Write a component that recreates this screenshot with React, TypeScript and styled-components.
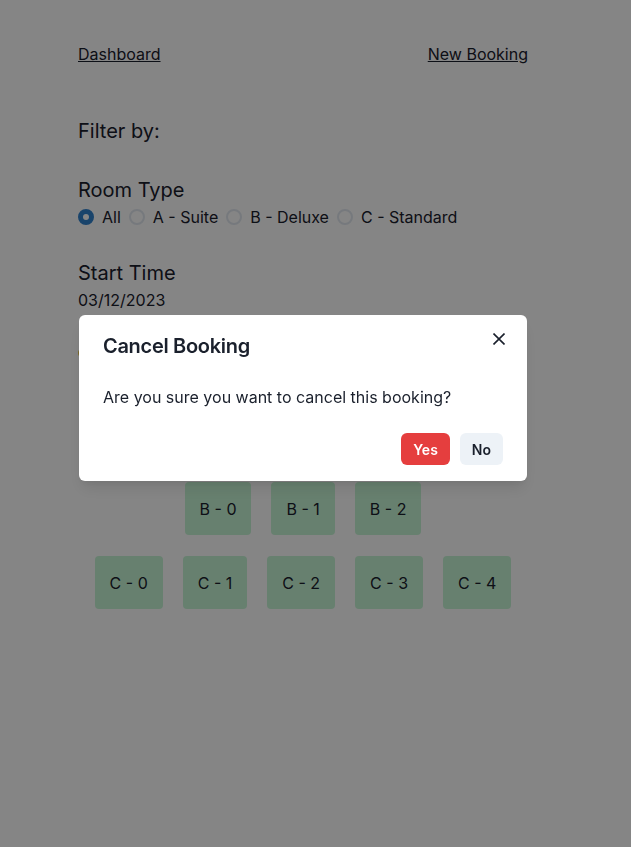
import React from "react";
import styled, { createGlobalStyle } from "styled-components";

const GlobalStyle = createGlobalStyle`
  html, body {
    margin: 0;
    padding: 0;
    background: #ffffff;
    font-family: Inter, "Noto Sans", sans-serif;
    color: #1a202c;
  }
`;

const ROOM_ROWS = [
  ["A - 0", "A - 1"],
  ["B - 0", "B - 1", "B - 2"],
  ["C - 0", "C - 1", "C - 2", "C - 3", "C - 4"],
];

const ROOM_TYPES = ["All", "A - Suite", "B - Deluxe", "C - Standard"];

const Page = styled.div`
  width: 450px;
  padding: 42px 0 0 78px;
`;

const Nav = styled.nav`
  display: flex;
  justify-content: space-between;
  line-height: 24px;
  font-size: 16px;
`;

const NavLink = styled.a`
  color: #1a202c;
  text-decoration: underline;
`;

const Heading = styled.div`
  font-size: 20px;
  line-height: 30px;
  margin-top: ${(p: { $gap: number }) => p.$gap}px;
`;

const RadioRow = styled.div`
  display: flex;
  align-items: center;
  gap: 8px;
  font-size: 16px;
  line-height: 24px;
`;

const RadioItem = styled.label`
  display: flex;
  align-items: center;
  gap: 8px;
`;

const RadioDot = styled.span<{ $on?: boolean }>`
  box-sizing: border-box;
  width: 16px;
  height: 16px;
  border-radius: 50%;
  border: 2px solid ${(p) => (p.$on ? "#3182ce" : "#e2e8f0")};
  background: ${(p) => (p.$on ? "#3182ce" : "transparent")};
  display: flex;
  align-items: center;
  justify-content: center;
  &::after {
    content: "";
    display: ${(p) => (p.$on ? "block" : "none")};
    width: 6px;
    height: 6px;
    border-radius: 50%;
    background: #fff;
  }
`;

const DateValue = styled.div`
  font-size: 16px;
  line-height: 24px;
`;

const Legend = styled.div`
  display: flex;
  align-items: center;
  gap: 8px;
  margin-top: 37px;
  height: 8px;
`;

const Swatch = styled.span`
  width: 8px;
  height: 8px;
  border-radius: 50%;
  background: #ecc94b;
`;

const Rooms = styled.div`
  display: flex;
  flex-direction: column;
  align-items: center;
  gap: 21px;
  margin-top: 51px;
`;

const RoomRow = styled.div`
  display: flex;
  gap: 20px;
`;

const Room = styled.div`
  height: 53px;
  padding: 0 15px;
  display: flex;
  align-items: center;
  border-radius: 4px;
  background: #c6f6d5;
  font-size: 16px;
`;

const Overlay = styled.div`
  position: fixed;
  inset: 0;
  background: rgba(0, 0, 0, 0.48);
`;

const ModalWrap = styled.div`
  position: fixed;
  top: 0;
  left: 0;
  width: 606px;
  display: flex;
  justify-content: center;
  padding-top: 315px;
`;

const Modal = styled.section`
  position: relative;
  width: 448px;
  background: #fff;
  border-radius: 6px;
  box-shadow: 0 10px 15px -3px rgba(0, 0, 0, 0.1),
    0 4px 6px -2px rgba(0, 0, 0, 0.05);
`;

const ModalHeader = styled.header`
  padding: 16px 24px;
  font-size: 20px;
  line-height: 30px;
  font-weight: 600;
  letter-spacing: -0.3px;
`;

const CloseButton = styled.button`
  position: absolute;
  top: 8px;
  right: 12px;
  width: 32px;
  height: 32px;
  border: none;
  background: transparent;
  padding: 0;
  display: flex;
  align-items: center;
  justify-content: center;
  color: #1a202c;
`;

const ModalBody = styled.div`
  padding: 8px 24px;
  font-size: 16px;
  line-height: 24px;
`;

const ModalFooter = styled.footer`
  display: flex;
  justify-content: flex-end;
  gap: 10px;
  padding: 16px 24px;
`;

const Button = styled.button<{ $danger?: boolean }>`
  height: 32px;
  padding: 0 12px;
  border: none;
  border-radius: 6px;
  font-family: inherit;
  font-size: 14px;
  font-weight: 600;
  background: ${(p) => (p.$danger ? "#e53e3e" : "#edf2f7")};
  color: ${(p) => (p.$danger ? "#ffffff" : "#1a202c")};
`;

export default function App() {
  return (
    <>
      <GlobalStyle />
      <Page>
        <Nav>
          <NavLink href="#">Dashboard</NavLink>
          <NavLink href="#">New Booking</NavLink>
        </Nav>
        <Heading $gap={50}>Filter by:</Heading>
        <Heading $gap={29}>Room Type</Heading>
        <RadioRow>
          {ROOM_TYPES.map((t, i) => (
            <RadioItem key={t}>
              <RadioDot $on={i === 0} />
              {t}
            </RadioItem>
          ))}
        </RadioRow>
        <Heading $gap={29}>Start Time</Heading>
        <DateValue>03/12/2023</DateValue>
        <Legend>
          <Swatch />
        </Legend>
        <Rooms>
          {ROOM_ROWS.map((row, i) => (
            <RoomRow key={i}>
              {row.map((r) => (
                <Room key={r}>{r}</Room>
              ))}
            </RoomRow>
          ))}
        </Rooms>
      </Page>
      <Overlay />
      <ModalWrap>
        <Modal>
          <ModalHeader>Cancel Booking</ModalHeader>
          <CloseButton aria-label="Close">
            <svg width="12" height="12" viewBox="0 0 12 12">
              <path
                d="M0.5 0.5 L11.5 11.5 M11.5 0.5 L0.5 11.5"
                stroke="currentColor"
                strokeWidth="1.6"
                fill="none"
              />
            </svg>
          </CloseButton>
          <ModalBody>Are you sure you want to cancel this booking?</ModalBody>
          <ModalFooter>
            <Button $danger>Yes</Button>
            <Button>No</Button>
          </ModalFooter>
        </Modal>
      </ModalWrap>
    </>
  );
}
